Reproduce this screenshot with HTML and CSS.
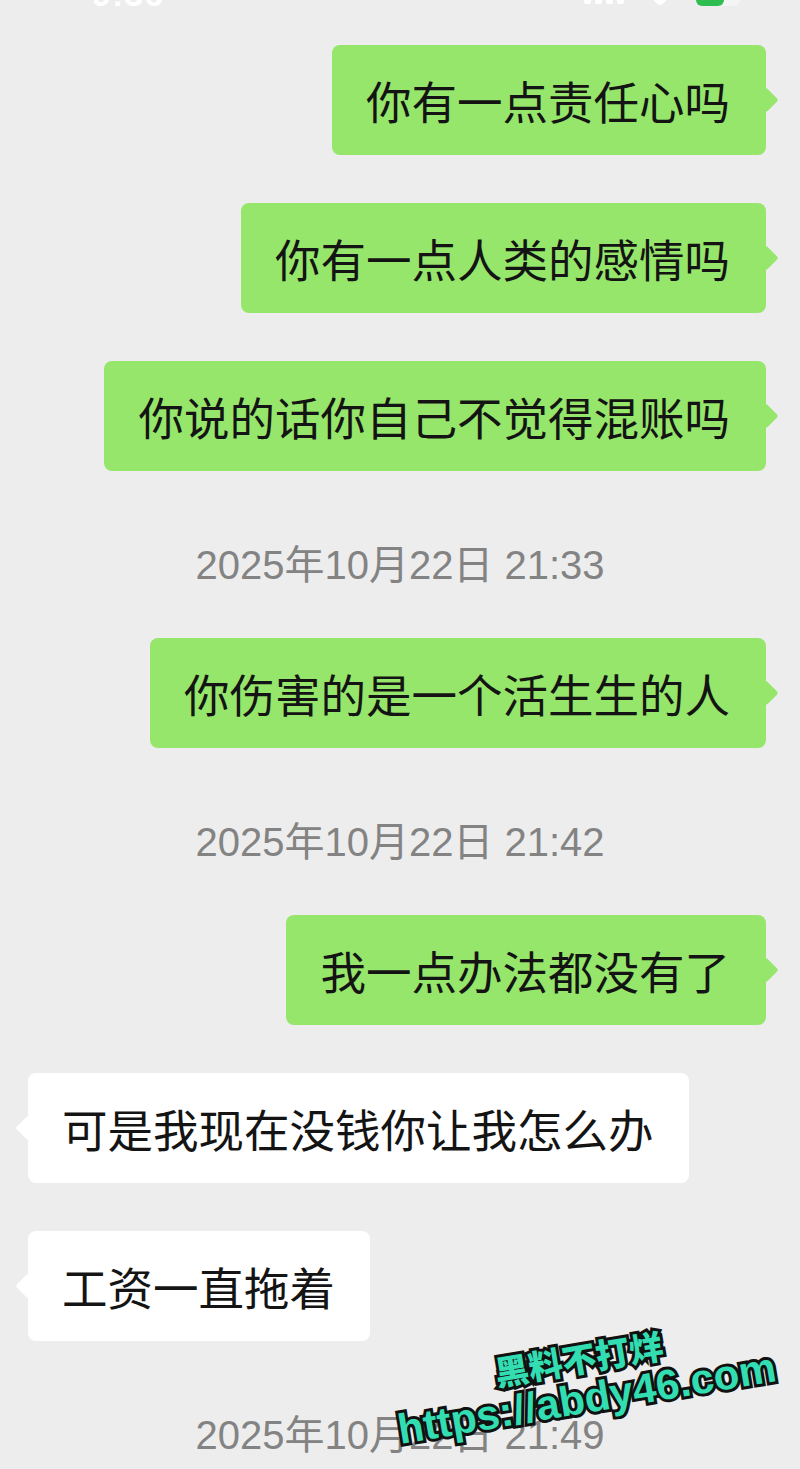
FILE: index.html
```html
<!DOCTYPE html>
<html lang="zh-CN">
<head>
<meta charset="utf-8">
<title>聊天记录</title>
<link rel="stylesheet" href="styles.css">
</head>
<body>
<div class="screen">
  <div class="status">
    <div class="clock">9:36</div>
    <div class="status-right">
      <div class="signal"><i></i><i></i><i></i><i></i></div>
      <div class="wifi"></div>
      <div class="battery"><span class="level"></span></div>
    </div>
  </div>

  <div class="chat">
    <div class="row me"><div class="bubble green">你有一点责任心吗</div></div>
    <div class="row me"><div class="bubble green">你有一点人类的感情吗</div></div>
    <div class="row me"><div class="bubble green">你说的话你自己不觉得混账吗</div></div>
    <div class="time">2025年10月22日 21:33</div>
    <div class="row me"><div class="bubble green">你伤害的是一个活生生的人</div></div>
    <div class="time">2025年10月22日 21:42</div>
    <div class="row me"><div class="bubble green">我一点办法都没有了</div></div>
    <div class="row other"><div class="bubble white">可是我现在没钱你让我怎么办</div></div>
    <div class="row other"><div class="bubble white">工资一直拖着</div></div>
    <div class="time">2025年10月22日 21:49</div>
  </div>

  <div class="watermark">
    <div class="wm-line1">黑料不打烊</div>
    <div class="wm-line2">https://abdy46.com</div>
  </div>
</div>
</body>
</html>
```

FILE: styles.css
```css
html, body {
  margin: 0;
  padding: 0;
  background: #ededed;
}

.screen {
  position: relative;
  width: 800px;
  height: 1469px;
  overflow: hidden;
  background: #ededed;
  font-family: "Liberation Sans", "Noto Sans CJK SC", sans-serif;
}

/* status bar – only the bottom edge of it is visible */
.status {
  height: 8px;
  overflow: hidden;
  display: flex;
  justify-content: space-between;
  align-items: flex-end;
  padding: 0 60px 0 92px;
}

.clock {
  color: #ffffff;
  font-size: 34px;
  font-weight: 700;
  line-height: 28px;
  height: 34px;
  display: flex;
  align-items: flex-end;
  letter-spacing: 1px;
}

.status-right {
  display: flex;
  align-items: flex-end;
  gap: 30px;
  height: 30px;
}

.signal {
  display: flex;
  align-items: flex-end;
  gap: 4px;
  height: 20px;
  padding-bottom: 4px;
}
.signal i {
  display: block;
  width: 7px;
  height: 16px;
  background: #ffffff;
  border-radius: 2px;
}

.wifi {
  width: 12px;
  height: 12px;
  margin-bottom: 4px;
  background: #ffffff;
  transform: rotate(45deg);
  border-radius: 0 0 4px 0;
}

.battery {
  width: 44px;
  height: 22px;
  border-radius: 6px;
  background: #f4f4f4;
  display: flex;
  margin-bottom: 2px;
}
.battery .level {
  width: 28px;
  height: 22px;
  background: #2ebd4f;
  border-radius: 6px;
}

/* chat */
.chat {
  display: flex;
  flex-direction: column;
  padding-top: 37px;
}

.row {
  display: flex;
  margin-bottom: 48px;
}
.row.me {
  justify-content: flex-end;
  padding-right: 34px;
}
.row.other {
  justify-content: flex-start;
  padding-left: 28px;
}

.bubble {
  position: relative;
  height: 110px;
  display: flex;
  align-items: center;
  padding: 0 36px 0 34px;
  border-radius: 8px;
  font-family: "Noto Sans CJK SC", sans-serif;
  font-size: 45.5px;
  color: #141414;
  white-space: nowrap;
}

.bubble.green {
  background: #95e66a;
}
.bubble.white {
  background: #ffffff;
  padding: 0 35px 0 34px;
}

.bubble::after {
  content: "";
  position: absolute;
  top: 50%;
  width: 18px;
  height: 18px;
  margin-top: -9px;
  border-radius: 3px;
  transform: rotate(45deg);
}
.bubble.green::after {
  right: -9px;
  background: #95e66a;
}
.bubble.white::after {
  left: -9px;
  background: #ffffff;
}

.row + .time {
  margin-top: 26px;
}

.time {
  height: 40px;
  line-height: 40px;
  text-align: center;
  font-size: 40px;
  color: #838383;
  margin-bottom: 53px;
  padding-left: 0;
  white-space: nowrap;
}

/* watermark overlay */
.watermark {
  position: absolute;
  left: 388px;
  top: 1370px;
  transform-origin: 0 0;
  transform: rotate(-9.5deg);
  color: #33ddb2;
  -webkit-text-stroke: 6px #111111;
  paint-order: stroke fill;
  white-space: nowrap;
}

.wm-line1 {
  font-family: "Noto Sans CJK SC", sans-serif;
  font-weight: 900;
  font-size: 34px;
  line-height: 40px;
  height: 40px;
  padding-left: 105px;
}

.wm-line2 {
  font-family: "Liberation Sans", sans-serif;
  font-weight: 700;
  font-size: 42px;
  line-height: 42px;
  height: 42px;
  letter-spacing: 0;
}
```
